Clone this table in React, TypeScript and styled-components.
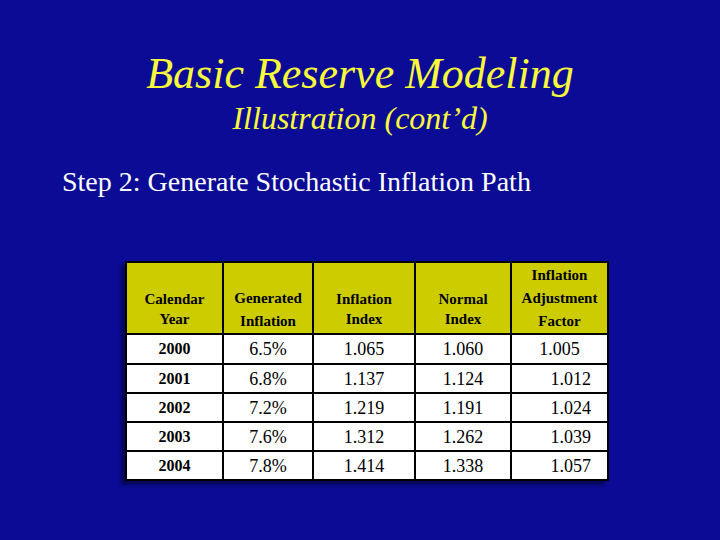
import React from "react";
import styled, { createGlobalStyle } from "styled-components";

const SERIF = `"Liberation Serif", "Times New Roman", Times, serif`;

const Global = createGlobalStyle`
  html, body { margin: 0; padding: 0; background: #0b0b95; font-family: ${SERIF}; }
  * { box-sizing: border-box; }
`;

const Slide = styled.div`
  width: 720px;
  height: 540px;
  background: #0b0b95;
  font-family: ${SERIF};
  display: flex;
  flex-direction: column;
  padding-top: 49px;
  overflow: hidden;
`;

const Title = styled.h1`
  margin: 0;
  font-family: ${SERIF};
  font-size: 44px;
  line-height: 50px;
  font-style: italic;
  font-weight: normal;
  color: #fafa3c;
  text-align: center;
`;

const Subtitle = styled.h2`
  margin: 1px 0 0;
  font-family: ${SERIF};
  font-size: 32px;
  line-height: 36px;
  font-style: italic;
  font-weight: normal;
  color: #fafa3c;
  text-align: center;
`;

const Step = styled.p`
  margin: 30px 0 0 62px;
  font-family: ${SERIF};
  font-size: 28px;
  line-height: 32px;
  color: #ffffff;
`;

const Table = styled.table`
  margin: 63px 0 0 125px;
  width: 482px;
  table-layout: fixed;
  border-collapse: collapse;
  border: 2px solid #000;
  background: #fff;
  font-family: ${SERIF};
  box-shadow: -4px 4px 3px rgba(0, 0, 20, 0.45);
`;

const HeadRow = styled.tr`
  height: 72px;
`;

const HeadCell = styled.th<{ $lh: number; $pb: number }>`
  border: 2px solid #000;
  background: #cccc00;
  color: #000;
  font-family: ${SERIF};
  font-size: 15px;
  font-weight: bold;
  line-height: ${(p) => p.$lh}px;
  padding: 0 2px ${(p) => p.$pb}px;
  vertical-align: bottom;
  text-align: center;
`;

const BodyRow = styled.tr<{ $h: number }>`
  height: ${(p) => p.$h}px;
`;

const Cell = styled.td<{ $year?: boolean; $right?: boolean }>`
  border: 2px solid #000;
  color: #000;
  font-family: ${SERIF};
  padding: 0 ${(p) => (p.$right ? "16px" : "2px")} 0 2px;
  font-size: ${(p) => (p.$year ? "16px" : "18px")};
  font-weight: ${(p) => (p.$year ? "bold" : "normal")};
  line-height: 20px;
  vertical-align: middle;
  text-align: ${(p) => (p.$right ? "right" : "center")};
`;

const headers: { lines: string[]; lh: number; pb: number }[] = [
  { lines: ["Calendar", "Year"], lh: 20, pb: 4 },
  { lines: ["Generated", "Inflation"], lh: 23, pb: 0 },
  { lines: ["Inflation", "Index"], lh: 20, pb: 4 },
  { lines: ["Normal", "Index"], lh: 20, pb: 4 },
  { lines: ["Inflation", "Adjustment", "Factor"], lh: 23, pb: 0 },
];

const rows = [
  ["2000", "6.5%", "1.065", "1.060", "1.005"],
  ["2001", "6.8%", "1.137", "1.124", "1.012"],
  ["2002", "7.2%", "1.219", "1.191", "1.024"],
  ["2003", "7.6%", "1.312", "1.262", "1.039"],
  ["2004", "7.8%", "1.414", "1.338", "1.057"],
];

const rowHeights = [30, 29, 29, 29, 29];
const colWidths = [97, 90, 102, 96, 97];

export default function App() {
  return (
    <>
      <Global />
      <Slide>
        <Title>Basic Reserve Modeling</Title>
        <Subtitle>Illustration (cont’d)</Subtitle>
        <Step>Step 2: Generate Stochastic Inflation Path</Step>
        <Table>
          <colgroup>
            {colWidths.map((w, i) => (
              <col key={i} style={{ width: w }} />
            ))}
          </colgroup>
          <thead>
            <HeadRow>
              {headers.map((h, i) => (
                <HeadCell key={i} $lh={h.lh} $pb={h.pb}>
                  {h.lines.map((l, j) => (
                    <React.Fragment key={j}>
                      {j > 0 && <br />}
                      {l}
                    </React.Fragment>
                  ))}
                </HeadCell>
              ))}
            </HeadRow>
          </thead>
          <tbody>
            {rows.map((r, i) => (
              <BodyRow key={i} $h={rowHeights[i]}>
                {r.map((v, j) => (
                  <Cell key={j} $year={j === 0} $right={j === 4 && i > 0}>
                    {v}
                  </Cell>
                ))}
              </BodyRow>
            ))}
          </tbody>
        </Table>
      </Slide>
    </>
  );
}
